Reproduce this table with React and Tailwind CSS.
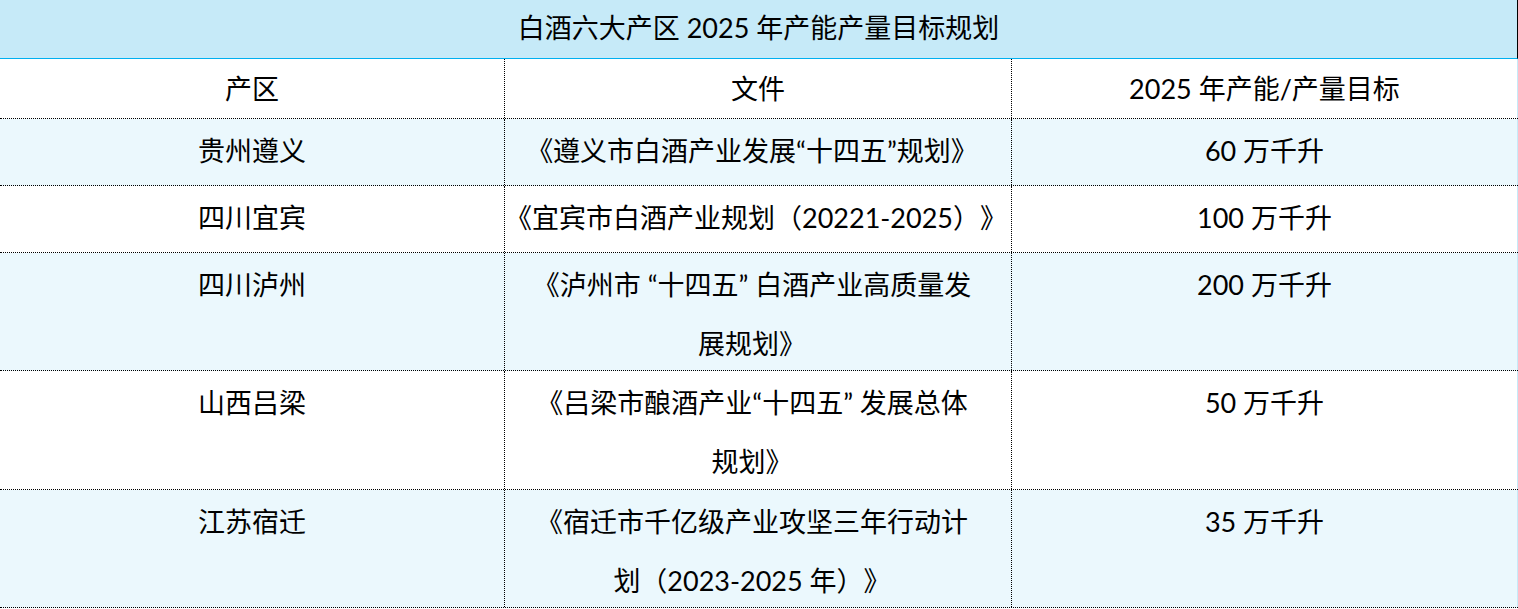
import React from 'react';

const rows = [
  {
    area: '贵州遵义',
    doc: ['《遵义市白酒产业发展“十四五”规划》'],
    target: '60 万千升',
    h: 'h-[67px]',
    bg: 'bg-[#ebf8fd]',
  },
  {
    area: '四川宜宾',
    doc: ['《宜宾市白酒产业规划（20221-2025）》'],
    target: '100 万千升',
    h: 'h-[67px]',
    bg: 'bg-white',
  },
  {
    area: '四川泸州',
    doc: ['《泸州市 “十四五” 白酒产业高质量发', '展规划》'],
    target: '200 万千升',
    h: 'h-[118px]',
    bg: 'bg-[#ebf8fd]',
  },
  {
    area: '山西吕梁',
    doc: ['《吕梁市酿酒产业“十四五” 发展总体', '规划》'],
    target: '50 万千升',
    h: 'h-[119px]',
    bg: 'bg-white',
  },
  {
    area: '江苏宿迁',
    doc: ['《宿迁市千亿级产业攻坚三年行动计', '划（2023-2025 年）》'],
    target: '35 万千升',
    h: 'h-[118px]',
    bg: 'bg-[#ebf8fd]',
  },
];

function Cell({ children, className = '' }) {
  return (
    <div className={`pt-[2px] text-center leading-[59px] ${className}`}>
      {children}
    </div>
  );
}

export default function App() {
  return (
    <div className="w-[1518px] bg-white text-[27px] text-black [text-spacing-trim:space-all] [font-family:Lato,'Noto_Sans_CJK_SC',sans-serif]">
      <div className="flex h-[59px] items-center justify-center border-b border-r border-b-[#00b0f0] border-r-black border-r-dotted bg-[#c6eaf8]">
        <span className="-mt-[2px]">白酒六大产区 2025 年产能产量目标规划</span>
      </div>

      <div className="flex h-[60px] border-b border-dotted border-black bg-white leading-[59px]">
        <div className="w-[505px] border-r border-dotted border-black text-center">产区</div>
        <div className="w-[507px] border-r border-dotted border-black text-center">文件</div>
        <div className="w-[506px] border-r border-solid border-r-[#c6eaf8] text-center">
          2025 年产能/产量目标
        </div>
      </div>

      {rows.map((r) => (
        <div key={r.area} className={`flex ${r.h} ${r.bg} border-b border-dotted border-black`}>
          <Cell className="w-[505px] border-r border-dotted border-black">{r.area}</Cell>
          <Cell className="w-[507px] whitespace-pre border-r border-dotted border-black pr-[12px]">
            {r.doc.map((line, i) => (
              <div key={i}>{line}</div>
            ))}
          </Cell>
          <Cell className="w-[506px] border-r border-solid border-r-[#c6eaf8]">{r.target}</Cell>
        </div>
      ))}
    </div>
  );
}
